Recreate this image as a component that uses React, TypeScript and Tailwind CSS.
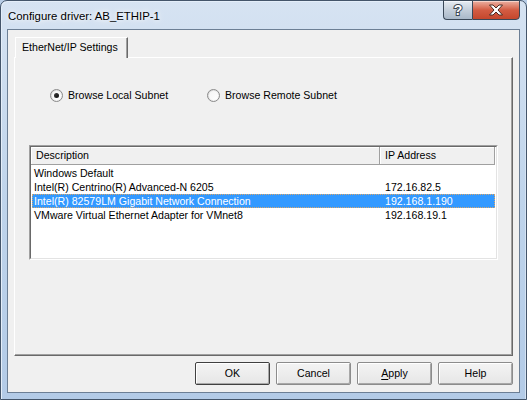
const rows = [
  { desc: 'Windows Default', ip: '' },
  { desc: 'Intel(R) Centrino(R) Advanced-N 6205', ip: '172.16.82.5' },
  { desc: 'Intel(R) 82579LM Gigabit Network Connection', ip: '192.168.1.190', selected: true },
  { desc: 'VMware Virtual Ethernet Adapter for VMnet8', ip: '192.168.19.1' },
];

function Radio({ checked, label }: { checked?: boolean; label: string }) {
  return (
    <div className="flex items-center">
      <div className="flex h-[13px] w-[13px] items-center justify-center rounded-full border border-[#8a8a8a] bg-gradient-to-br from-[#d8d8d8] to-[#fbfbfb]">
        <div className="flex h-[9px] w-[9px] items-center justify-center rounded-full bg-gradient-to-br from-[#f4f4f4] to-[#ffffff]">
          {checked && <div className="h-[5px] w-[5px] rounded-full bg-gradient-to-br from-[#404040] to-[#0c0c0c]" />}
        </div>
      </div>
      <span className="ml-[5px] leading-[13px]">{label}</span>
    </div>
  );
}

function Btn({ children, isDefault }: { children: React.ReactNode; isDefault?: boolean }) {
  return (
    <button
      className={
        'flex h-[23px] w-[75px] items-center justify-center rounded-[2px] border bg-gradient-to-b from-[#f4f4f4] to-[#e6e6e6] text-[10.6px] leading-none text-black shadow-[inset_1px_1px_0_#ffffff,inset_-1px_-1px_0_#a8a8a8] ' +
        (isDefault ? 'border-[#404040]' : 'border-[#8c8c8c]')
      }
    >
      {children}
    </button>
  );
}

export default function App() {
  return (
    <div className="h-[400px] w-[527px] overflow-hidden bg-[#b8cde6] font-['Liberation_Sans',Arial,sans-serif] text-[10.6px] text-black">
      <div className="flex h-full w-full flex-col rounded-t-[7px] border border-[#44556a] bg-gradient-to-b from-[#d6e3f2] via-[#bfd4eb] to-[#b3cbe7] px-[6px] pb-[6px] shadow-[inset_1px_1px_0_#e4eef9,inset_-1px_0_0_#d5e3f3]">
        {/* Title bar */}
        <div className="flex h-[28px] shrink-0 items-start justify-between">
          <span className="ml-[1px] mt-[8px] text-[11.4px] leading-[14px] [text-shadow:0_0_8px_#ffffff,0_0_4px_#ffffff]">
            Configure driver: AB_ETHIP-1
          </span>
          <div className="-mt-px flex">
            <div className="flex h-[20px] w-[29px] items-center justify-center rounded-bl-[4px] border border-r-0 border-[#3a4858] bg-gradient-to-b from-[#e6ecf2] via-[#c4cfdb] to-[#a9b8c9] shadow-[inset_0_1px_0_#f4f7fb]">
              <svg width="14" height="16" viewBox="0 0 14 16">
                <text x="7" y="13" textAnchor="middle" fontFamily="Liberation Sans, Arial, sans-serif" fontWeight="bold" fontSize="14" fill="#ffffff" stroke="#3b4653" strokeWidth="2" paintOrder="stroke">?</text>
              </svg>
            </div>
            <div className="flex h-[20px] w-[48px] items-center justify-center rounded-br-[4px] border border-[#3a4858] bg-gradient-to-b from-[#eab0a2] via-[#d35c43] to-[#c5462c] shadow-[inset_0_1px_0_#f6d2c8]">
              <svg width="16" height="12" viewBox="0 0 16 12">
                <path d="M1.5 1 L5 1 L8 4 L11 1 L14.5 1 L10 6 L14.5 11 L11 11 L8 8 L5 11 L1.5 11 L6 6 Z" fill="#ffffff" stroke="#4a2a22" strokeWidth="1" strokeLinejoin="round" />
              </svg>
            </div>
          </div>
        </div>

        {/* Client area */}
        <div className="flex flex-1 flex-col border border-[#6c7f95] bg-[#f0f0f0] px-[6px] pb-[7px] pt-[7px]">
          {/* Tab strip */}
          <div className="flex h-[20px] shrink-0">
            <div className="relative z-10 ml-[1px] flex h-[21px] w-[113px] items-center border-l border-r border-t border-l-white border-r-[#696969] border-t-white bg-[#f0f0f0] pl-[6px] shadow-[inset_-1px_0_0_#a0a0a0]">
              EtherNet/IP Settings
            </div>
          </div>

          {/* Tab panel */}
          <div className="flex flex-1 flex-col border border-b-[#696969] border-l-white border-r-[#696969] border-t-white shadow-[inset_-1px_-1px_0_#a0a0a0]">
            <div className="ml-[35px] mt-[31px] flex">
              <div className="w-[157px]">
                <Radio checked label="Browse Local Subnet" />
              </div>
              <Radio label="Browse Remote Subnet" />
            </div>

            {/* List view */}
            <div className="ml-[14px] mt-[43px] flex h-[115px] w-[469px] flex-col border border-b-white border-l-[#a0a0a0] border-r-white border-t-[#a0a0a0] bg-white">
              <div className="flex h-full flex-col border border-b-[#e3e3e3] border-l-[#696969] border-r-[#e3e3e3] border-t-[#696969]">
                <div className="flex h-[18px] shrink-0">
                  <div className="flex w-[349px] items-center border-b border-r border-b-[#a0a0a0] border-r-[#a0a0a0] bg-[#f0f0f0] pl-[5px] shadow-[inset_1px_1px_0_#ffffff]">
                    Description
                  </div>
                  <div className="flex w-[115px] items-center border-b border-r border-b-[#a0a0a0] border-r-[#a0a0a0] bg-[#f0f0f0] pl-[5px] shadow-[inset_1px_1px_0_#ffffff]">
                    IP Address
                  </div>
                  <div className="flex-1 bg-white" />
                </div>
                <div className="ml-[1px] mr-[1px] mt-[1px] flex flex-col">
                  {rows.map((r) => (
                    <div
                      key={r.desc}
                      className={
                        'flex h-[14px] items-center leading-[14px] ' +
                        (r.selected
                          ? 'bg-[#3399ff] text-white outline outline-1 -outline-offset-1 outline-dotted outline-[#d9a66a]'
                          : '')
                      }
                    >
                      <span className="w-[353px] pl-[2px]">{r.desc}</span>
                      <span>{r.ip}</span>
                    </div>
                  ))}
                </div>
              </div>
            </div>
          </div>

          {/* Buttons */}
          <div className="mt-[6px] flex shrink-0 justify-end gap-[6px]">
            <Btn isDefault>OK</Btn>
            <Btn>Cancel</Btn>
            <Btn>
              <span>
                <span className="underline underline-offset-2">A</span>pply
              </span>
            </Btn>
            <Btn>Help</Btn>
          </div>
        </div>
      </div>
    </div>
  );
}
